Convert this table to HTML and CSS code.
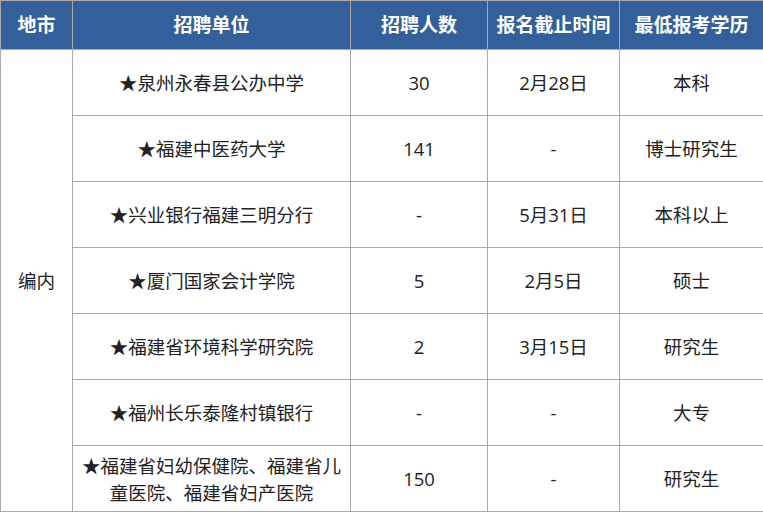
FILE: index.html
```html
<!DOCTYPE html>
<html lang="zh-CN">
<head>
<meta charset="utf-8">
<link rel="stylesheet" href="styles.css">
</head>
<body>
<table class="jobs">
  <colgroup>
    <col class="c-city">
    <col class="c-unit">
    <col class="c-num">
    <col class="c-date">
    <col class="c-edu">
  </colgroup>
  <thead>
    <tr>
      <th>地市</th>
      <th>招聘单位</th>
      <th>招聘人数</th>
      <th>报名截止时间</th>
      <th>最低报考学历</th>
    </tr>
  </thead>
  <tbody>
    <tr>
      <td rowspan="7">编内</td>
      <td>★泉州永春县公办中学</td>
      <td>30</td>
      <td>2月28日</td>
      <td>本科</td>
    </tr>
    <tr>
      <td>★福建中医药大学</td>
      <td>141</td>
      <td>-</td>
      <td>博士研究生</td>
    </tr>
    <tr>
      <td>★兴业银行福建三明分行</td>
      <td>-</td>
      <td>5月31日</td>
      <td>本科以上</td>
    </tr>
    <tr>
      <td>★厦门国家会计学院</td>
      <td>5</td>
      <td>2月5日</td>
      <td>硕士</td>
    </tr>
    <tr>
      <td>★福建省环境科学研究院</td>
      <td>2</td>
      <td>3月15日</td>
      <td>研究生</td>
    </tr>
    <tr>
      <td>★福州长乐泰隆村镇银行</td>
      <td>-</td>
      <td>-</td>
      <td>大专</td>
    </tr>
    <tr>
      <td>★福建省妇幼保健院、福建省儿童医院、福建省妇产医院</td>
      <td>150</td>
      <td>-</td>
      <td>研究生</td>
    </tr>
  </tbody>
</table>
</body>
</html>
```
FILE: styles.css
```css
html, body {
  margin: 0;
  padding: 0;
  background: #ffffff;
}

.jobs {
  border-collapse: collapse;
  table-layout: fixed;
  width: 763px;
  font-family: "Open Sans", "Noto Sans CJK SC", sans-serif;
  font-size: 18.5px;
  color: #222222;
}

.c-city { width: 72px; }
.c-unit { width: 278px; }
.c-num { width: 137px; }
.c-date { width: 132px; }
.c-edu { width: 144px; }

.jobs th,
.jobs td {
  border: 1px solid #a9a9a9;
  text-align: center;
  vertical-align: middle;
  padding: 0 6px;
  line-height: 27px;
}

.jobs th {
  background: #33609a;
  color: #ffffff;
  font-weight: bold;
  font-size: 19px;
  height: 49px;
  box-sizing: border-box;
}

.jobs td {
  height: 66px;
  box-sizing: border-box;
}
```
